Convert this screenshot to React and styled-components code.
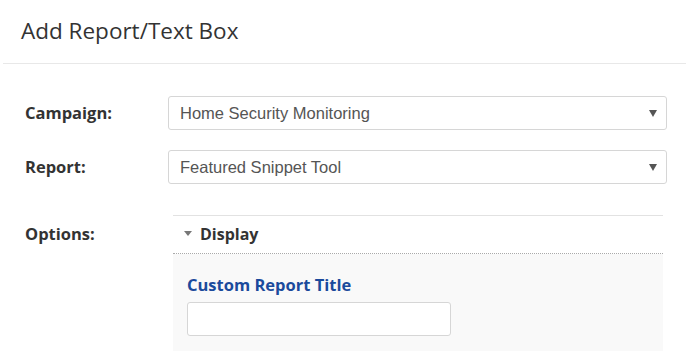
import styled, { createGlobalStyle } from 'styled-components'

const Global = createGlobalStyle`
    body{
        margin: 0;
        background: #fff;
        font-family: "Open Sans", Arial, sans-serif;
        color: #333;
    }
`;

function Select({ value }){
    return(
        <SelectBox>
            <span>{value}</span>
            <Caret viewBox='0 0 8 7'><path d='M0 0H8L4 7Z' fill='#555'/></Caret>
        </SelectBox>
    )
}

export default function App(){
    return(
        <>
            <Global/>
            <Modal>
                <Header>
                    <h1>Add Report/Text Box</h1>
                </Header>
                <Form>
                    <Label>Campaign:</Label>
                    <Select value='Home Security Monitoring'/>
                    <Label>Report:</Label>
                    <Select value='Featured Snippet Tool'/>
                    <Label options={true}>Options:</Label>
                    <Panel>
                        <PanelHead>
                            <Tri viewBox='0 0 8 5'><path d='M0 0H8L4 5Z' fill='#777'/></Tri>
                            Display
                        </PanelHead>
                        <PanelBody>
                            <FieldTitle>Custom Report Title</FieldTitle>
                            <TextInput type='text'/>
                        </PanelBody>
                    </Panel>
                </Form>
            </Modal>
        </>
    )
}

const Modal = styled.div`
    width: 686px;
    height: 351px;
    overflow: hidden;
`;

const Header = styled.div`
    height: 63px;
    margin-left: 3px;
    border-bottom: 1px solid #e8e8e8;
    display: flex;
    align-items: center;

    h1{
        margin: 0 0 2px 18px;
        font-size: 22.5px;
        font-weight: 400;
        color: #333;
    }
`;

const Form = styled.div`
    display: grid;
    grid-template-columns: 143px 499px;
    row-gap: 20px;
    padding: 32px 0 0 25px;
    align-items: center;
`;

const Label = styled.div`
    font-size: 16.5px;
    line-height: 22px;
    font-weight: 700;
    color: #333;
    align-self: ${props => props.options ? 'start' : 'center'};
    margin-top: ${props => props.options ? '19px' : '0'};
`;

const SelectBox = styled.div`
    height: 34px;
    box-sizing: border-box;
    border: 1px solid #d6d6d6;
    border-radius: 3px;
    display: flex;
    align-items: center;
    justify-content: space-between;
    padding: 0 9px 0 11px;
    font-family: "Liberation Sans", Arial, sans-serif;
    font-size: 16.5px;
    color: #555;
`;

const Caret = styled.svg`
    width: 8px;
    height: 7px;
`;

const Panel = styled.div`
    margin: 11px 0 0 5px;
    width: 490px;
    border-top: 1px solid #e2e2e2;
`;

const PanelHead = styled.div`
    height: 38px;
    box-sizing: border-box;
    padding: 0 0 2px 11px;
    display: flex;
    align-items: center;
    gap: 8px;
    font-size: 16px;
    font-weight: 700;
    color: #333;
    border-bottom: 1px dotted #aaa;
`;

const Tri = styled.svg`
    width: 8px;
    height: 5px;
`;

const PanelBody = styled.div`
    background: #f9f9f9;
    padding: 20px 14px 20px;
    height: 120px;
`;

const FieldTitle = styled.div`
    font-size: 16.5px;
    line-height: 22px;
    font-weight: 700;
    color: #1b4a9c;
    margin-bottom: 6px;
`;

const TextInput = styled.input`
    display: block;
    width: 264px;
    height: 34px;
    box-sizing: border-box;
    border: 1px solid #d6d6d6;
    border-radius: 3px;
    background: #fff;
    margin: 0;
`;
